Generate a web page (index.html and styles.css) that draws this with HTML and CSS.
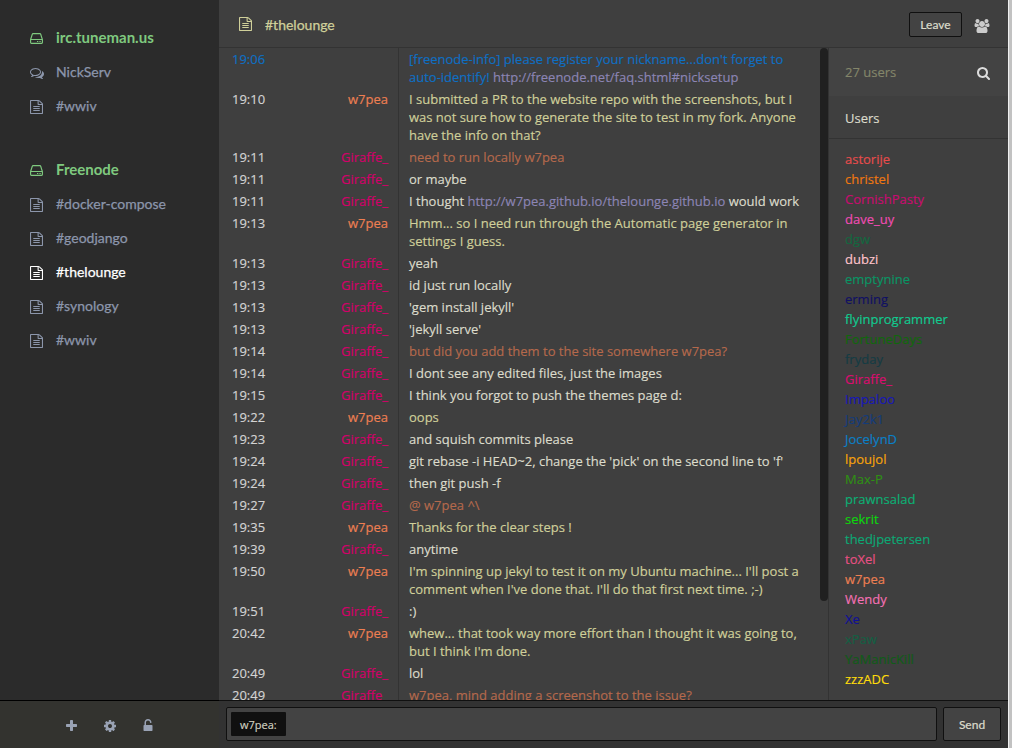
FILE: index.html
```html
<!DOCTYPE html>
<html lang="en">
<head>
<meta charset="utf-8">
<title>#thelounge</title>
<link rel="stylesheet" href="styles.css">
</head>
<body>
<svg class="defs" width="0" height="0">
  <symbol id="file" viewBox="128 0 1536 1792" preserveAspectRatio="none"><path d="M1596 380q28 28 48 76t20 88v1152q0 40-28 68t-68 28h-1344q-40 0-68-28t-28-68v-1600q0-40 28-68t68-28h896q40 0 88 20t76 48zm-444-244v376h376q-10-29-22-41l-313-313q-12-12-41-22zm384 1528v-1024h-416q-40 0-68-28t-28-68v-416h-768v1536h1280zm-1024-864q0-14 9-23t23-9h704q14 0 23 9t9 23v64q0 14-9 23t-23 9h-704q-14 0-23-9t-9-23v-64zm736 224q14 0 23 9t9 23v64q0 14-9 23t-23 9h-704q-14 0-23-9t-9-23v-64q0-14 9-23t23-9h704zm0 256q14 0 23 9t9 23v64q0 14-9 23t-23 9h-704q-14 0-23-9t-9-23v-64q0-14 9-23t23-9h704z"/></symbol>
  <symbol id="hdd" viewBox="0 0 13 11"><path d="M.6 6.500 2.300 1.200Q2.500.6 3.100.6h6.800q.6 0 .8.6l1.700 5.300v3.100q0 .8-.8.8H1.400q-.8 0-.8-.8zM.6 6.500h11.800" fill="none" stroke="currentColor" stroke-width="1.150"/><path d="M7 8h1.300v1.100H7zM9.400 8h1.300v1.100H9.400z"/></symbol>
  <symbol id="comments" viewBox="0 256 1792 1408"><path d="M704 384q-153 0-286 52t-211.500 141-78.500 191q0 82 53 158t149 132l97 56-35 84q34-20 62-39l44-31 53 10q78 14 153 14 153 0 286-52t211.500-141 78.500-191-78.500-191-211.500-141-286-52zm0-128q191 0 353.500 68.500t256.500 186.500 94 257-94 257-256.500 186.500-353.500 68.500q-86 0-176-16-124 88-278 128-36 9-86 16h-3q-11 0-20.500-8t-11.500-21q-1-3-1-6.500t.5-6.500 2-6l2.500-5 3.500-5.500 4-5 4.500-5 4-4.500q5-6 23-25t26-29.500 22.500-29 25-38.500 20.500-44q-124-72-195-177t-71-224q0-139 94-257t256.500-186.500 353.500-68.500zm822 1169q10 24 20.500 44t25 38.500 22.500 29 26 29.500 23 25q1 1 4 4.500t4.500 5 4 5 3.500 5.500l2.500 5 2 6 .5 6.500-1 6.500q-3 14-13 22t-22 7q-50-7-86-16-154-40-278-128-90 16-176 16-271 0-472-132 58 4 88 4 161 0 309-45t264-129q125-92 192-212t67-254q0-77-23-152 129 71 204 178t75 230q0 120-71 224.500t-195 176.500z"/></symbol>
  <symbol id="plus" viewBox="192 128 1408 1408"><path d="M1600 736v192q0 40-28 68t-68 28h-416v416q0 40-28 68t-68 28h-192q-40 0-68-28t-28-68v-416h-416q-40 0-68-28t-28-68v-192q0-40 28-68t68-28h416v-416q0-40 28-68t68-28h192q40 0 68 28t28 68v416h416q40 0 68 28t28 68z"/></symbol>
  <symbol id="cog" viewBox="128 128 1536 1536"><path d="M1152 896q0-106-75-181t-181-75-181 75-75 181 75 181 181 75 181-75 75-181zm512-109v222q0 12-8 23t-20 13l-185 28q-19 54-39 91 35 50 107 138 10 12 10 25t-9 23q-27 37-99 108t-94 71q-12 0-26-9l-138-108q-44 23-91 38-16 136-29 186-7 28-36 28h-222q-14 0-24.500-8.500t-11.500-21.500l-28-184q-49-16-90-37l-141 107q-10 9-25 9-14 0-25-11-126-114-165-168-7-10-7-23 0-12 8-23 15-21 51-66.500t54-70.500q-27-50-41-99l-183-27q-13-2-21-12.500t-8-23.500v-222q0-12 8-23t19-13l186-28q14-46 39-92-40-57-107-138-10-12-10-24 0-10 9-23 26-36 98.500-107.500t94.500-71.500q13 0 26 10l138 107q44-23 91-38 16-136 29-186 7-28 36-28h222q14 0 24.500 8.500t11.500 21.500l28 184q49 16 90 37l142-107q9-9 24-9 13 0 25 10 129 119 165 170 7 8 7 22 0 12-8 23-15 21-51 66.500t-54 70.500q26 50 41 98l183 28q13 2 21 12.500t8 23.500z"/></symbol>
  <symbol id="unlock" viewBox="320 128 1152 1536"><path d="M1376 896q40 0 68 28t28 68v576q0 40-28 68t-68 28h-960q-40 0-68-28t-28-68v-576q0-40 28-68t68-28h32v-320q0-185 131.500-316.500t316.500-131.500 316.500 131.500 131.500 316.500q0 26-19 45t-45 19h-64q-26 0-45-19t-19-45q0-106-75-181t-181-75-181 75-75 181v320h736z"/></symbol>
  <symbol id="search" viewBox="64 128 1664 1664"><path d="M1216 832q0-185-131.500-316.500t-316.500-131.500-316.500 131.500-131.500 316.500 131.500 316.500 316.500 131.500 316.500-131.500 131.500-316.500zm512 832q0 52-38 90t-90 38q-54 0-90-38l-343-342q-179 124-399 124-143 0-273.500-55.500t-225-150-150-225-55.500-273.500 55.500-273.500 150-225 225-150 273.500-55.500 273.500 55.500 225 150 150 225 55.500 273.500q0 220-124 399l343 343q37 37 37 90z"/></symbol>
  <symbol id="users" viewBox="0 0 1920 1792"><path d="M593 896q-162 5-265 128h-134q-82 0-138-40.500t-56-118.500q0-353 124-353 6 0 43.500 21t97.500 42.500 119 21.500q67 0 133-23-5 37-5 66 0 139 81 256zm1071 637q0 120-73 189.500t-194 69.500h-874q-121 0-194-69.500t-73-189.500q0-53 3.500-103.500t14-109 26.500-108.500 43-97.500 62-81 85.500-53.500 111.500-20q10 0 43 21.500t73 48 107 48 135 21.500 135-21.500 107-48 73-48 43-21.500q61 0 111.500 20t85.500 53.500 62 81 43 97.500 26.500 108.500 14 109 3.500 103.500zm-1024-1277q0 106-75 181t-181 75-181-75-75-181 75-181 181-75 181 75 75 181zm704 384q0 159-112.500 271.500t-271.500 112.500-271.500-112.500-112.500-271.500 112.500-271.500 271.500-112.500 271.500 112.500 112.500 271.500zm576 225q0 78-56 118.500t-138 40.500h-134q-103-123-265-128 81-117 81-256 0-29-5-66 66 23 133 23 59 0 119-21.500t97.500-42.500 43.500-21q124 0 124 353zm-128-609q0 106-75 181t-181 75-181-75-75-181 75-181 181-75 181 75 75 181z"/></symbol>
</svg>
<div class="app">
  <aside class="sidebar">
    <nav class="networks">
      <section class="network">
        <div class="chan lobby"><svg class="i-hdd"><use href="#hdd"/></svg><span>irc.tuneman.us</span></div>
        <div class="chan"><svg class="i-comments"><use href="#comments"/></svg><span>NickServ</span></div>
        <div class="chan"><svg class="i-file"><use href="#file"/></svg><span>#wwiv</span></div>
      </section>
      <section class="network">
        <div class="chan lobby"><svg class="i-hdd"><use href="#hdd"/></svg><span>Freenode</span></div>
        <div class="chan"><svg class="i-file"><use href="#file"/></svg><span>#docker-compose</span></div>
        <div class="chan"><svg class="i-file"><use href="#file"/></svg><span>#geodjango</span></div>
        <div class="chan active"><svg class="i-file"><use href="#file"/></svg><span>#thelounge</span></div>
        <div class="chan"><svg class="i-file"><use href="#file"/></svg><span>#synology</span></div>
        <div class="chan"><svg class="i-file"><use href="#file"/></svg><span>#wwiv</span></div>
      </section>
    </nav>
    <footer class="tools">
      <svg class="i-plus"><use href="#plus"/></svg>
      <svg class="i-cog"><use href="#cog"/></svg>
      <svg class="i-unlock"><use href="#unlock"/></svg>
    </footer>
  </aside>
  <main class="main">
    <header class="header">
      <svg class="i-file"><use href="#file"/></svg>
      <h1 class="title">#thelounge</h1>
      <button class="leave">Leave</button>
      <svg class="i-users"><use href="#users"/></svg>
    </header>
    <div class="content">
      <div class="chat">
        <div class="msg motd"><span class="time">19:06</span><span class="from"></span><span class="text">[freenode-info] please register your nickname...don't forget to<br>auto-identify! <a>http://freenode.net/faq.shtml#nicksetup</a></span></div>
        <div class="msg self"><span class="time">19:10</span><span class="from">w7pea</span><span class="text">I submitted a PR to the website repo with the screenshots, but I<br>was not sure how to generate the site to test in my fork. Anyone<br>have the info on that?</span></div>
        <div class="msg highlight"><span class="time">19:11</span><span class="from">Giraffe_</span><span class="text">need to run locally w7pea</span></div>
        <div class="msg"><span class="time">19:11</span><span class="from">Giraffe_</span><span class="text">or maybe</span></div>
        <div class="msg"><span class="time">19:11</span><span class="from">Giraffe_</span><span class="text">I thought <a>http://w7pea.github.io/thelounge.github.io</a> would work</span></div>
        <div class="msg self"><span class="time">19:13</span><span class="from">w7pea</span><span class="text">Hmm... so I need run through the Automatic page generator in<br>settings I guess.</span></div>
        <div class="msg"><span class="time">19:13</span><span class="from">Giraffe_</span><span class="text">yeah</span></div>
        <div class="msg"><span class="time">19:13</span><span class="from">Giraffe_</span><span class="text">id just run locally</span></div>
        <div class="msg"><span class="time">19:13</span><span class="from">Giraffe_</span><span class="text">'gem install jekyll'</span></div>
        <div class="msg"><span class="time">19:13</span><span class="from">Giraffe_</span><span class="text">'jekyll serve'</span></div>
        <div class="msg highlight"><span class="time">19:14</span><span class="from">Giraffe_</span><span class="text">but did you add them to the site somewhere w7pea?</span></div>
        <div class="msg"><span class="time">19:14</span><span class="from">Giraffe_</span><span class="text">I dont see any edited files, just the images</span></div>
        <div class="msg"><span class="time">19:15</span><span class="from">Giraffe_</span><span class="text">I think you forgot to push the themes page d:</span></div>
        <div class="msg self"><span class="time">19:22</span><span class="from">w7pea</span><span class="text">oops</span></div>
        <div class="msg"><span class="time">19:23</span><span class="from">Giraffe_</span><span class="text">and squish commits please</span></div>
        <div class="msg"><span class="time">19:24</span><span class="from">Giraffe_</span><span class="text">git rebase -i HEAD~2, change the 'pick' on the second line to 'f'</span></div>
        <div class="msg"><span class="time">19:24</span><span class="from">Giraffe_</span><span class="text">then git push -f</span></div>
        <div class="msg highlight"><span class="time">19:27</span><span class="from">Giraffe_</span><span class="text">@ w7pea ^\</span></div>
        <div class="msg self"><span class="time">19:35</span><span class="from">w7pea</span><span class="text">Thanks for the clear steps !</span></div>
        <div class="msg"><span class="time">19:39</span><span class="from">Giraffe_</span><span class="text">anytime</span></div>
        <div class="msg self"><span class="time">19:50</span><span class="from">w7pea</span><span class="text">I'm spinning up jekyl to test it on my Ubuntu machine... I'll post a<br>comment when I've done that. I'll do that first next time. ;-)</span></div>
        <div class="msg"><span class="time">19:51</span><span class="from">Giraffe_</span><span class="text">:)</span></div>
        <div class="msg self"><span class="time">20:42</span><span class="from">w7pea</span><span class="text">whew... that took way more effort than I thought it was going to,<br>but I think I'm done.</span></div>
        <div class="msg"><span class="time">20:49</span><span class="from">Giraffe_</span><span class="text">lol</span></div>
        <div class="msg highlight"><span class="time">20:49</span><span class="from">Giraffe_</span><span class="text">w7pea, mind adding a screenshot to the issue?</span></div>
      </div>
      <div class="track"><div class="thumb"></div></div>
      <aside class="users">
        <div class="count"><span>27 users</span><svg class="i-search"><use href="#search"/></svg></div>
        <div class="label">Users</div>
        <div class="names">
          <span class="c1">astorije</span><span class="c2">christel</span><span class="c3">CornishPasty</span><span class="c4">dave_uy</span><span class="c5">dgw</span><span class="c6">dubzi</span><span class="c7">emptynine</span><span class="c8">erming</span><span class="c9">flyinprogrammer</span><span class="c10">FortuneDays</span><span class="c11">fryday</span><span class="c12">Giraffe_</span><span class="c13">Impaloo</span><span class="c14">Jay2k1</span><span class="c15">JocelynD</span><span class="c16">lpoujol</span><span class="c17">Max-P</span><span class="c18">prawnsalad</span><span class="c19">sekrit</span><span class="c20">thedjpetersen</span><span class="c21">toXel</span><span class="c22">w7pea</span><span class="c23">Wendy</span><span class="c24">Xe</span><span class="c25">xPaw</span><span class="c26">YaManicKill</span><span class="c27">zzzADC</span>
        </div>
      </aside>
    </div>
    <form class="form">
      <div class="input"><span class="nick">w7pea:</span></div>
      <button type="button" class="send">Send</button>
    </form>
  </main>
  <div class="edge"></div>
</div>
</body>
</html>
```
FILE: styles.css
```css
* { box-sizing: border-box; }
body { margin: 0; background: #3f3f3f; overflow: hidden; }
svg { fill: currentColor; flex: none; display: block; }
.defs { position: absolute; }
.app { display: flex; width: 1012px; height: 748px; font: 13px/18px "Open Sans", sans-serif; color: #dcdccc; -webkit-text-stroke: 0.15px currentColor; }

.sidebar { width: 219px; display: flex; flex-direction: column; background: #2b2b2b; font-family: Lato, sans-serif; font-size: 14px; -webkit-text-stroke-width: 0.25px; }
.networks { flex: 1; padding-top: 21px; }
.network { margin-bottom: 30px; }
.chan { height: 34px; padding-left: 56px; display: flex; align-items: center; color: #8c96ab; }
.chan svg { margin-left: -26px; margin-right: 13px; }
.chan .i-file { margin-top: 2px; }
.chan .i-hdd { margin-top: 1px; }
.chan .i-comments { margin-top: 3px; margin-right: 12px; }
.lobby { color: #7fc97f; font-weight: 700; -webkit-text-stroke-width: 0; }
.lobby span { font-size: 15px; margin-top: -2px; }
.active { color: #fff; }
.i-file { width: 13px; height: 14px; }
.i-hdd { width: 13px; height: 11px; }
.i-comments { width: 14px; height: 11px; }
.tools { height: 48px; display: flex; align-items: center; padding: 2px 0 0 66px; background: #33332f; border-top: 1px solid #000; color: #99a2b4; }
.i-plus { width: 11px; height: 11px; margin-right: 27px; }
.i-cog { width: 12px; height: 12px; margin-right: 26.5px; }
.i-unlock { width: 10px; height: 12px; margin-top: -1px; }

.main { width: 789px; display: flex; flex-direction: column; }
.header { height: 48px; padding: 0 18px 0 20px; display: flex; align-items: center; border-bottom: 1px solid #333; color: #d0d09a; }
.header .i-file { margin-top: 1px; }
.title { flex: 1; margin: 3px 0 0 13px; font: 400 14px/20px Lato, sans-serif; -webkit-text-stroke-width: 0.25px; }
.leave { width: 53px; height: 25px; margin: 2px 12px 0 0; padding: 0; border: 1px solid #101010; border-radius: 2px; background: #434343; color: #dcdccc; font: 12px Lato, sans-serif; -webkit-text-stroke: 0.2px currentColor; }
.i-users { width: 16px; height: 14px; margin-top: 5px; color: #ccc; }

.content { flex: 1; min-height: 0; display: flex; overflow: hidden; }
.chat { width: 601px; }
.msg { display: grid; grid-template-columns: 65px 115px 1fr; white-space: nowrap; }
.time, .from, .text { padding: 2px 0; }
.time { padding-left: 13px; color: #d3d3d3; }
.from { padding-right: 10px; text-align: right; color: #d3006a; border-right: 1px solid #333; }
.text { padding-left: 10px; }
.self .from { color: #ee7f52; }
.self .text { color: #d0d09a; }
.highlight .text { color: #b5694c; }
.motd .time, .motd .text { color: #0e6fc4; }
.text a { color: #8c85b5; }
.msg .text a { color: #8c85b5; }
.track { width: 8px; }
.thumb { height: 553px; border-radius: 4px; background: #202020; }

.users { flex: 1; border-left: 1px solid #333; }
.count { height: 48px; padding: 0 18px 0 16px; display: flex; align-items: center; justify-content: space-between; background: #434343; color: #84866a; }
.i-search { width: 13px; height: 13px; margin-top: 3px; color: #dcdcdc; }
.label { height: 43px; padding: 13px 16px 0; border-bottom: 1px solid #333; }
.names { padding: 10px 16px; display: flex; flex-direction: column; line-height: 20px; }

.form { height: 48px; padding: 6px 7px 7px; display: flex; gap: 6px; background: #323232; border-top: 1px solid #101010; }
.input { flex: 1; height: 34px; padding: 4px; border: 1px solid #101010; border-radius: 2px; background: #434343; }
.nick { display: inline-block; height: 24px; padding: 0 9px; background: #101010; color: #d0d0c0; font-size: 11px; line-height: 26px; border-radius: 1px; vertical-align: top; }
.send { width: 58px; height: 34px; padding: 0; border: 1px solid #101010; border-radius: 2px; background: #434343; color: #dcdccc; font: 12px Lato, sans-serif; -webkit-text-stroke: 0.2px currentColor; }
.edge { width: 4px; background: #c2c2c2; border-left: 1px solid #f0f0f0; }

.c1 { color: #e84c4c; }
.c2 { color: #f07810; }
.c3 { color: #c80c70; }
.c4 { color: #f04cb4; }
.c5 { color: #14683f; }
.c6 { color: #ffc4cc; }
.c7 { color: #0a9564; }
.c8 { color: #101064; }
.c9 { color: #10cc90; }
.c10 { color: #10680c; }
.c11 { color: #143c44; }
.c12 { color: #dc0c70; }
.c13 { color: #1818b8; }
.c14 { color: #143c7c; }
.c15 { color: #0a80c8; }
.c16 { color: #f8a40a; }
.c17 { color: #2f9014; }
.c18 { color: #0cb074; }
.c19 { color: #0cd80c; }
.c20 { color: #0ca874; }
.c21 { color: #e85084; }
.c22 { color: #ee7f52; }
.c23 { color: #f470b4; }
.c24 { color: #101098; }
.c25 { color: #146044; }
.c26 { color: #105c18; }
.c27 { color: #ffdc0a; }
```
